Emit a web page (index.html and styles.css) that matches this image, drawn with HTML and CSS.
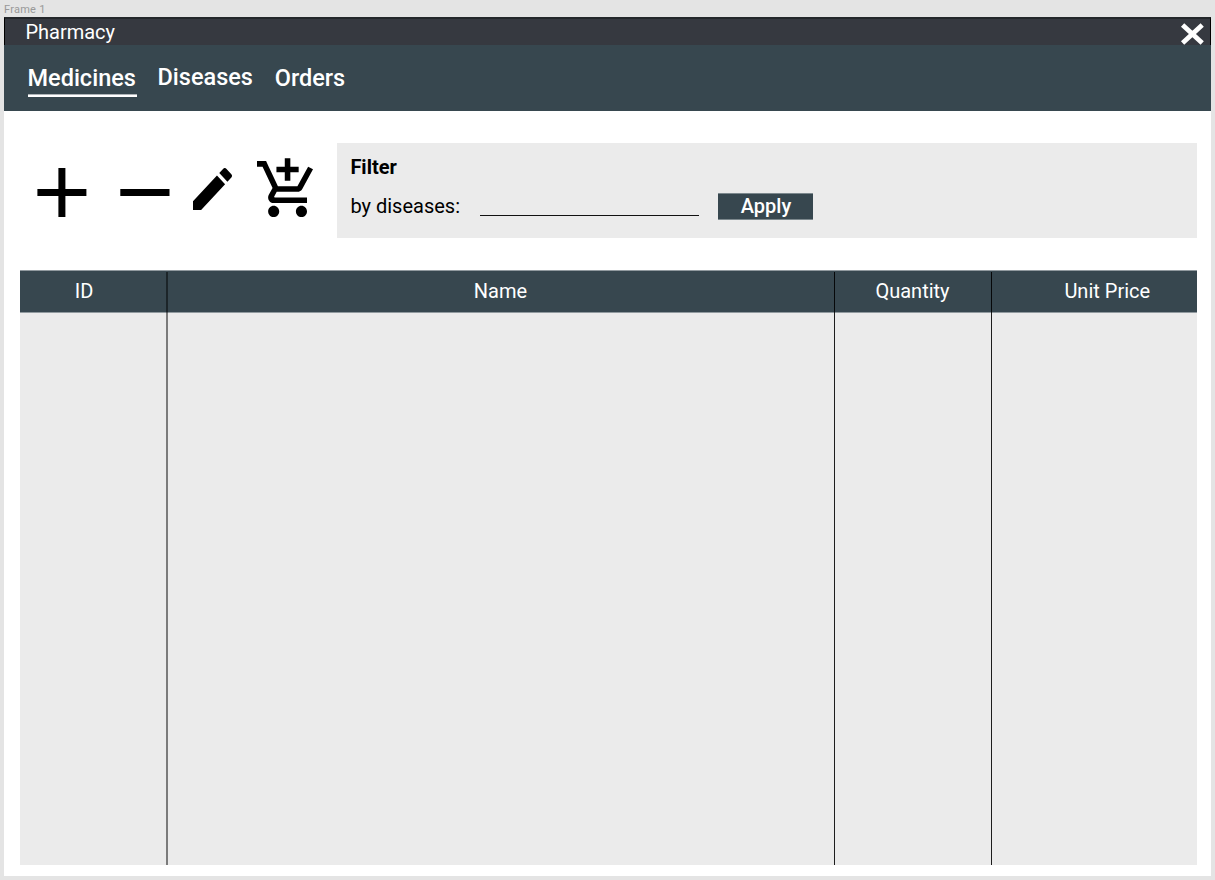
FILE: index.html
```html
<!DOCTYPE html>
<html lang="en">
<head>
<meta charset="utf-8">
<title>Pharmacy</title>
<link rel="stylesheet" href="styles.css">
</head>
<body>
<div class="frame-label">Frame 1</div>
<main class="window">
  <header class="titlebar">
    <span class="title">Pharmacy</span>
    <svg class="close" viewBox="0 0 24 22"><path d="M2.6 2L22.2 20M22.2 2L2.6 20" stroke="#fff" stroke-width="4.8"/></svg>
  </header>
  <nav class="tabs">
    <a class="tab active">Medicines</a>
    <a class="tab diseases">Diseases</a>
    <a class="tab orders">Orders</a>
  </nav>
  <section class="tools">
    <svg class="add" viewBox="0 0 50 49"><path d="M.4 21h21v-21h7v21h21v7h-21v21h-7v-21h-21z"/></svg>
    <svg class="remove" viewBox="0 0 50 7"><path d="M.3 0h49.2v7h-49.2z"/></svg>
    <svg class="edit" viewBox="3 3 18 18" preserveAspectRatio="none"><path d="M3 17.25V21h3.75L17.81 9.94l-3.75-3.75L3 17.25zM20.71 7.04c.39-.39.39-1.02 0-1.41l-2.34-2.34c-.39-.39-1.02-.39-1.41 0l-1.83 1.83 3.75 3.75 1.83-1.83z"/></svg>
    <svg class="cart" viewBox="1 .9 20.16 21.1" preserveAspectRatio="none"><path d="M11 9h2V6h3V4h-3V1h-2v3H8v2h3v3zm-4 9c-1.1 0-1.99.9-1.99 2S5.9 22 7 22s2-.9 2-2-.9-2-2-2zm10 0c-1.1 0-1.99.9-1.99 2s.89 2 1.99 2 2-.9 2-2-.9-2-2-2zm-9.83-3.25l.03-.12.9-1.63h7.45c.75 0 1.41-.41 1.75-1.03l3.86-7.01L19.42 4h-.01l-1.1 2-2.76 5H8.53l-.13-.27L6.16 6l-.95-2-.94-2H1v2h2l3.6 7.59-1.35 2.45c-.16.28-.25.61-.25.96 0 1.1.9 2 2 2h12v-2H7.42c-.13 0-.25-.11-.25-.25z"/></svg>
    <div class="filter">
      <div class="filter-title">Filter</div>
      <div class="filter-row">
        <span class="filter-label">by diseases:</span>
        <span class="field"></span>
        <span class="apply">Apply</span>
      </div>
    </div>
  </section>
  <section class="table">
    <div class="col id"><div class="head">ID</div></div>
    <div class="col name"><div class="head">Name</div></div>
    <div class="col quantity"><div class="head">Quantity</div></div>
    <div class="col price"><div class="head">Unit Price</div></div>
  </section>
</main>
</body>
</html>
```
FILE: styles.css
```css
* { box-sizing: border-box; }
body {
  margin: 0;
  height: 880px;
  overflow: hidden;
  background: #e4e4e4;
  font-family: Roboto, "Liberation Sans", sans-serif;
  font-size: 20px;
  color: #000;
}
svg { display: block; flex: none; }
.frame-label {
  height: 17px;
  padding: 3px 0 0 4px;
  font-family: Roboto, sans-serif;
  font-size: 11px;
  line-height: 13px;
  letter-spacing: 0.25px;
  color: #999;
}
.window {
  width: 1207px;
  height: 859px;
  margin-left: 4px;
  background: #fff;
}
.titlebar {
  display: flex;
  justify-content: space-between;
  height: 28px;
  padding: 0 6px 0 20.4px;
  border: 1px solid #000;
  border-top: 2px solid #24272b;
  border-bottom: 0;
  background: #363940;
  color: #fff;
}
.title { line-height: 27px; }
.close { width: 24px; height: 22px; margin-top: 4px; }
.tabs {
  display: flex;
  align-items: flex-start;
  height: 66px;
  padding: 20px 0 0 23.5px;
  background: #37474f;
  color: #fff;
  font-size: 23.5px;
  font-weight: 500;
  line-height: 26px;
}
.tab { white-space: nowrap; }
.active {
  width: 109px;
  height: 32px;
  background: linear-gradient(rgba(255, 255, 255, 0.6) 1px, #fff 1px) 0 100% / 100% 3px no-repeat;
}
.diseases { margin: -1px 0 0 21px; width: 98px; }
.orders { margin-left: 19.2px; }
.tools {
  display: flex;
  height: 159px;
  padding: 32px 14px 32px 33px;
}
.add { width: 50px; height: 49px; margin-top: 25px; }
.remove { width: 50px; height: 7px; margin: 46px 0 0 33px; }
.edit { width: 39px; height: 42px; margin: 25px 0 0 23px; }
.cart { width: 56px; height: 59px; margin: 15px 0 0 25px; }
.filter {
  flex: 1;
  margin-left: 24px;
  padding: 12px 13.4px;
  background: #ebebeb;
}
.filter-title { font-weight: 700; line-height: 25px; }
.filter-row { display: flex; align-items: flex-start; margin-top: 13px; }
.filter-label { width: 129.6px; line-height: 26px; }
.field { width: 219px; height: 23px; border-bottom: 1px solid #111; }
.apply {
  width: 95px;
  height: 27px;
  margin-left: 19px;
  border: solid #7c888d;
  border-width: 1px 0;
  background: #37474f;
  color: #fff;
  font-weight: 500;
  line-height: 24px;
  text-indent: 1px;
  text-align: center;
}
.table {
  display: grid;
  grid-template-columns: 147px 667px 157px 206px;
  width: 1177px;
  height: 595px;
  margin-left: 16px;
  background: #ebebeb;
}
.col { position: relative; }
/* column rules run over the header and the body */
.col + .col::before {
  content: "";
  position: absolute;
  top: 2px;
  bottom: 0;
  left: 0;
  width: 1px;
  background: rgba(0, 0, 0, 0.88);
}
.col.name::before {
  left: -1px;
  width: 2px;
  background: rgba(0, 0, 0, 0.48);
}
.head {
  height: 43px;
  border: solid #919a9f;
  border-width: 1px 0;
  background: #37474f;
  color: #fff;
  line-height: 41px;
  text-align: center;
}
.id .head { padding-right: 19px; }
.price .head { padding-left: 26.5px; }
```
